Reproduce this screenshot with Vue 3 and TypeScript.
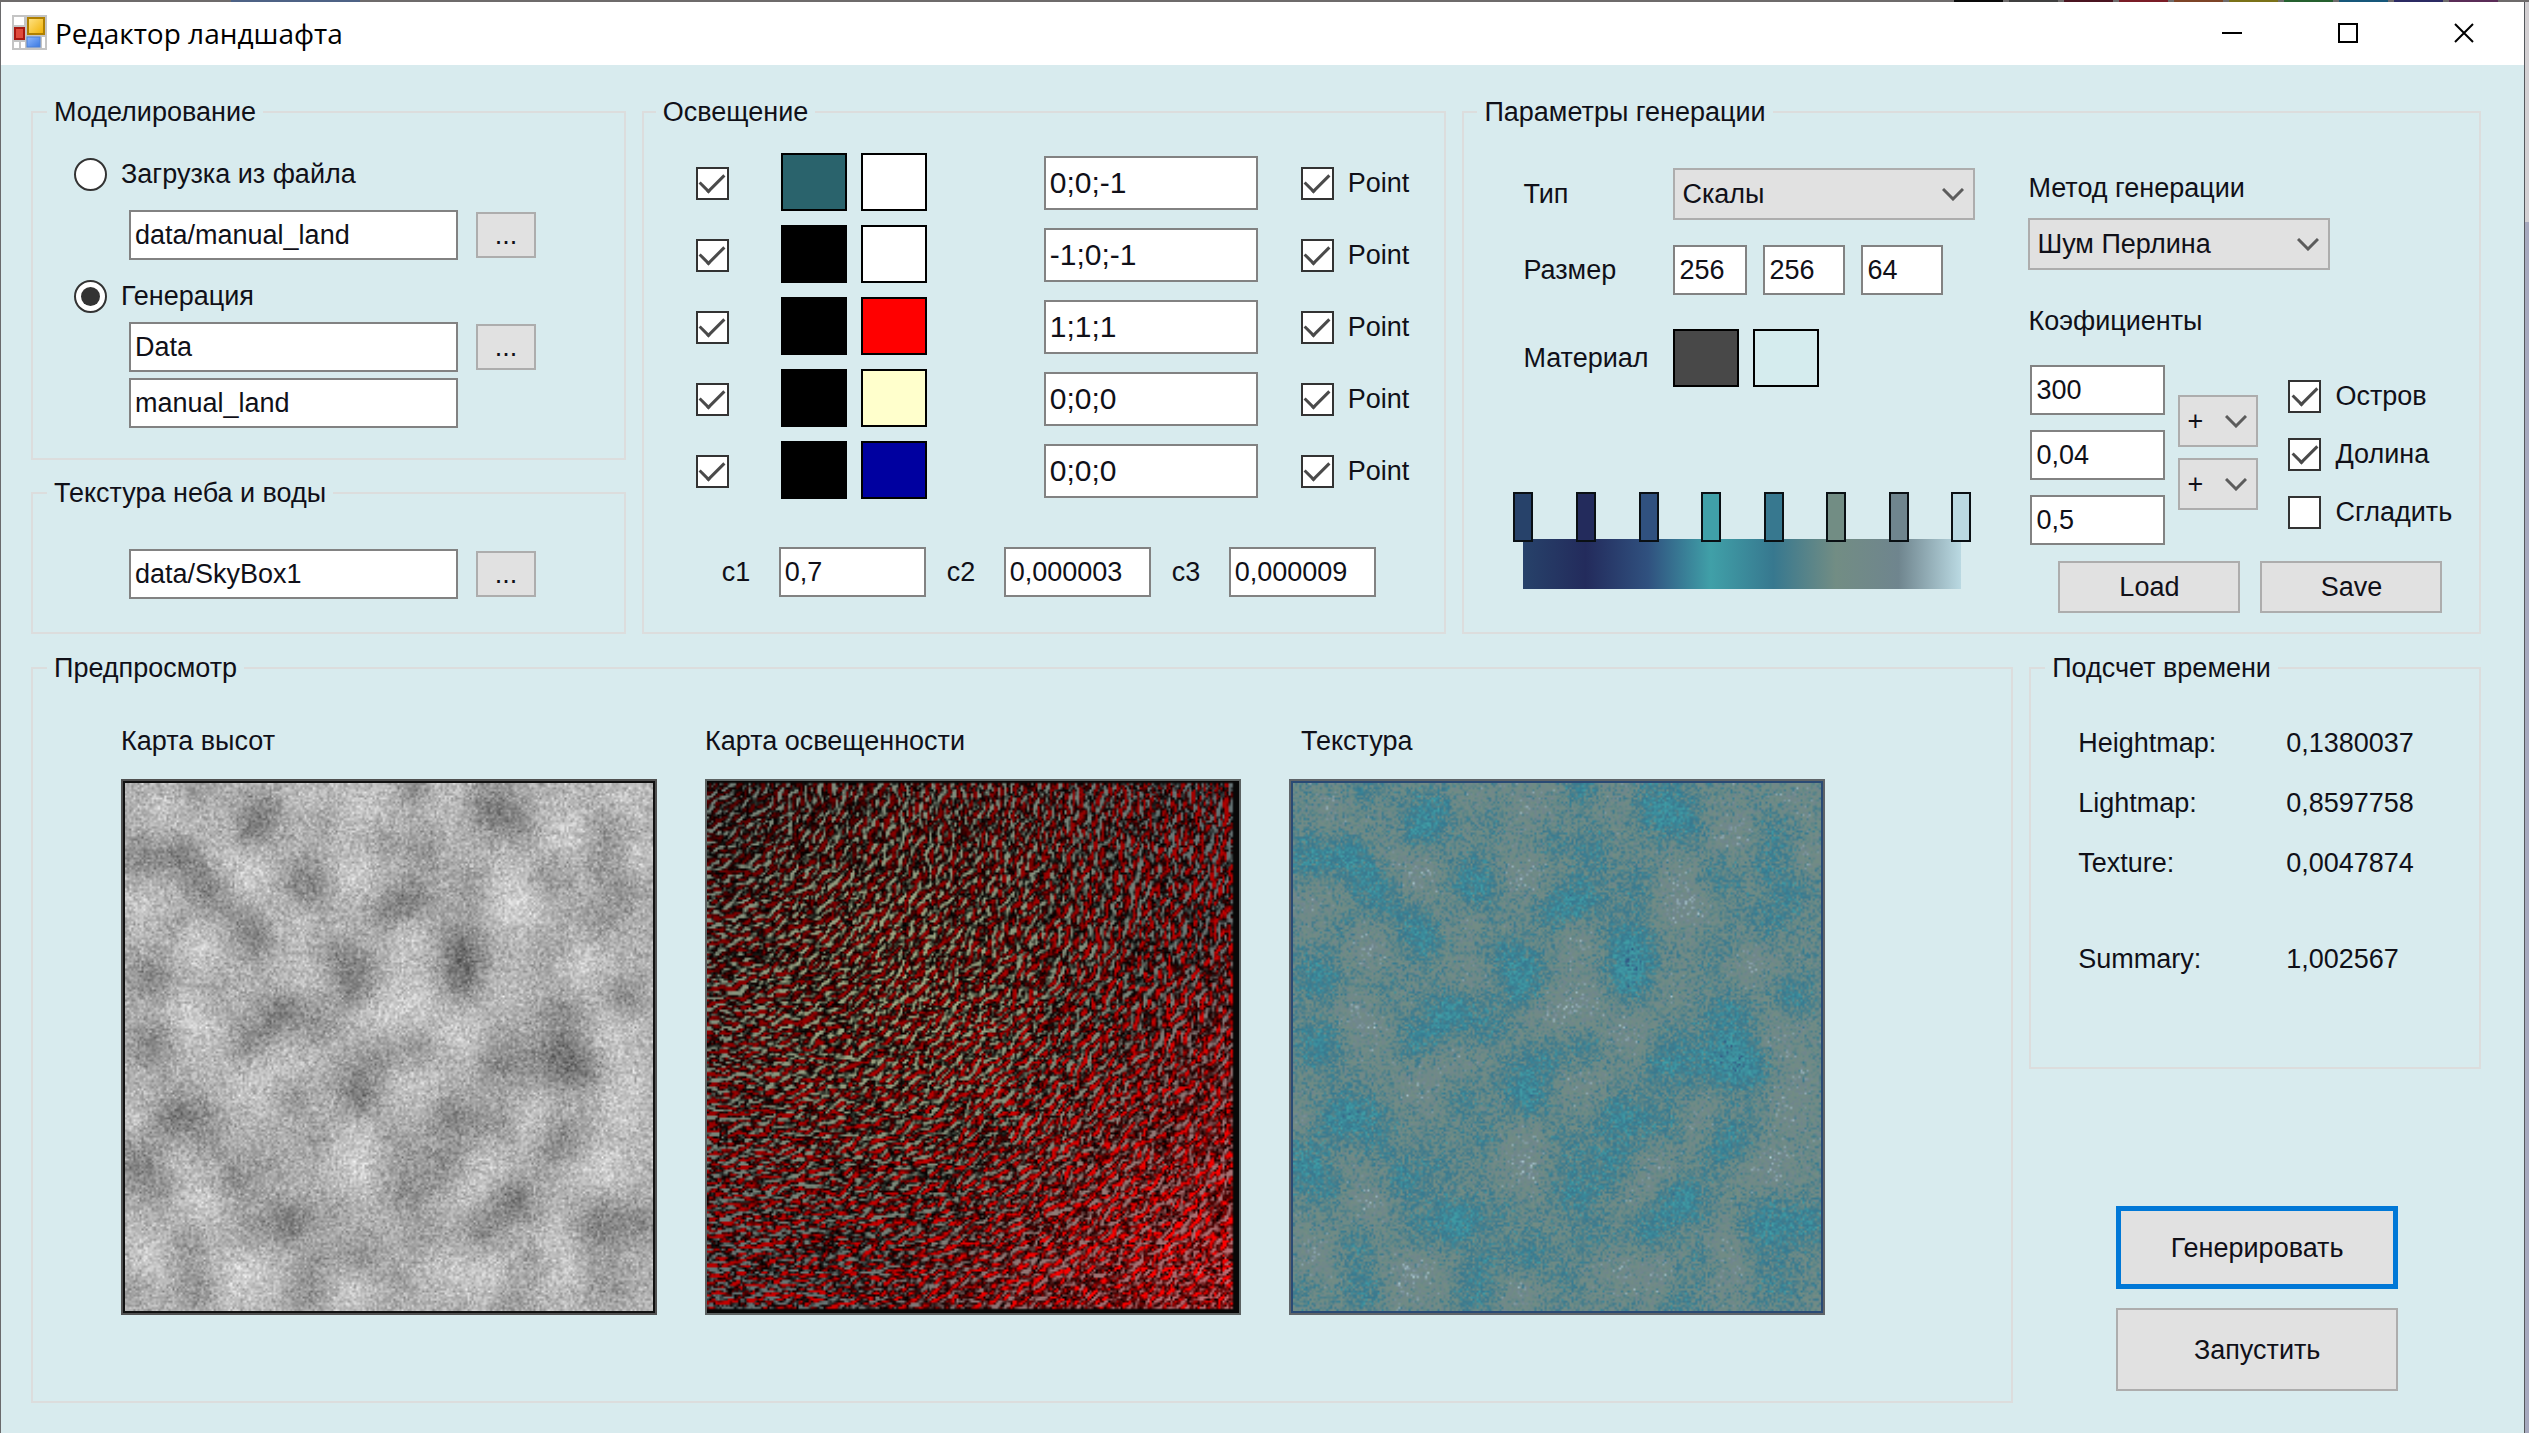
<script setup lang="ts">
import { onMounted, reactive, ref } from 'vue'

type Blob = [x: number, y: number, radius: number, weight: number]
type Rgb = [number, number, number]

interface Light {
  on: boolean
  ambient: string
  diffuse: string
  vector: string
  point: boolean
}

const source = ref('generate')
const loadPath = ref('data/manual_land')
const saveFolder = ref('Data')
const saveName = ref('manual_land')
const skyPath = ref('data/SkyBox1')

const lights = reactive<Light[]>([
  { on: true, ambient: '#2a636c', diffuse: '#ffffff', vector: '0;0;-1', point: true },
  { on: true, ambient: '#000000', diffuse: '#ffffff', vector: '-1;0;-1', point: true },
  { on: true, ambient: '#000000', diffuse: '#ff0000', vector: '1;1;1', point: true },
  { on: true, ambient: '#000000', diffuse: '#ffffcc', vector: '0;0;0', point: true },
  { on: true, ambient: '#000000', diffuse: '#0000a0', vector: '0;0;0', point: true },
])
const attenuation = reactive([
  { name: 'c1', value: '0,7' },
  { name: 'c2', value: '0,000003' },
  { name: 'c3', value: '0,000009' },
])

const kind = ref('Скалы')
const method = ref('Шум Перлина')
const size = reactive(['256', '256', '64'])
const material = ['#484848', '#d5ecee']
const factors = reactive(['300', '0,04', '0,5'])
const operators = reactive(['+', '+'])
const options = reactive([
  { name: 'Остров', on: true },
  { name: 'Долина', on: true },
  { name: 'Сгладить', on: false },
])
const palette = ['#27426a', '#232b5c', '#30517f', '#40a0a8', '#37788f', '#728d84', '#6f858e', '#bad9e2']
const ramp = `linear-gradient(to right, ${palette.join(', ')})`

const timings = [
  { name: 'Heightmap:', value: '0,1380037' },
  { name: 'Lightmap:', value: '0,8597758' },
  { name: 'Texture:', value: '0,0047874' },
  { name: 'Summary:', value: '1,002567' },
]

const keyColours = ['#0a0a0a', '#404040', '#4a1420', '#7a1c26', '#7d4427', '#7a7118', '#25602f', '#16577a', '#2b2a63', '#5a2c57']

const heightCanvas = ref<HTMLCanvasElement | null>(null)
const lightCanvas = ref<HTMLCanvasElement | null>(null)
const textureCanvas = ref<HTMLCanvasElement | null>(null)

const N = 256

const valleys: Blob[] = [
  [33, 4, 9, 0.5], [66, 14, 12, 0.9], [60, 24, 8, 0.6], [138, 2, 9, 0.8], [178, 11, 14, 1], [191, 20, 10, 0.6],
  [9, 35, 13, 0.9], [28, 35, 10, 0.8], [36, 45, 11, 0.5], [40, 53, 11, 0.6], [88, 48, 13, 1], [95, 18, 9, 0.4],
  [123, 26, 12, 0.4], [145, 32, 11, 0.5], [139, 55, 11, 0.95], [126, 62, 10, 0.7], [62, 74, 12, 1], [50, 62, 10, 0.5],
  [23, 68, 10, 0.4], [164, 83, 12, 1.1], [163, 95, 10, 0.9], [162, 72, 12, 0.4], [167, 51, 10, 0.5], [110, 91, 13, 1],
  [99, 80, 9, 0.5], [110, 103, 8, 0.4], [12, 94, 12, 0.9], [43, 101, 10, 0.4], [75, 110, 11, 1], [62, 122, 11, 0.7],
  [93, 116, 12, 0.6], [56, 129, 8, 0.4], [13, 126, 12, 0.9], [140, 128, 10, 0.6], [121, 133, 10, 0.6],
  [112, 147, 12, 0.9], [115, 156, 8, 0.4], [184, 135, 15, 0.8], [212, 133, 14, 1.3], [223, 141, 11, 0.5],
  [212, 112, 12, 0.6], [204, 106, 12, 0.2], [242, 103, 10, 0.8], [206, 80, 12, 0.4], [206, 45, 13, 0.5],
  [232, 35, 11, 0.6], [234, 20, 9, 0.5], [243, 51, 11, 0.6], [230, 66, 12, 0.5], [158, 162, 13, 0.9],
  [180, 164, 11, 0.6], [154, 185, 13, 0.7], [132, 175, 11, 0.4], [136, 197, 12, 0.7], [80, 152, 11, 0.5],
  [23, 162, 12, 1], [37, 160, 11, 0.6], [41, 175, 9, 0.4], [95, 172, 10, 0.5], [67, 183, 13, 0.4],
  [6, 185, 13, 0.9], [17, 197, 10, 0.5], [52, 193, 10, 0.7], [188, 202, 12, 1.1], [173, 216, 11, 0.7],
  [212, 172, 12, 0.9], [203, 181, 9, 0.3], [80, 212, 12, 1.1], [62, 216, 12, 0.5], [30, 223, 11, 0.6],
  [34, 244, 12, 0.7], [230, 214, 15, 1], [251, 212, 11, 0.7], [114, 229, 13, 0.6], [132, 241, 8, 0.4],
  [88, 246, 11, 0.7], [91, 231, 9, 0.4], [145, 220, 11, 0.5], [197, 231, 9, 0.5], [188, 250, 9, 0.6],
  [234, 243, 13, 0.5], [102, 206, 9, 0.4], [4, 244, 9, 0.4],
]

const peaks: Blob[] = [
  [21, 12, 14, 0.5], [60, 45, 13, 0.9], [43, 34, 9, 0.4], [117, 11, 16, 0.8], [86, 7, 12, 0.5], [110, 43, 13, 0.9],
  [158, 7, 11, 0.5], [212, 24, 14, 0.9], [242, 5, 13, 0.6], [249, 37, 10, 0.8], [186, 45, 12, 0.6], [190, 60, 14, 1],
  [10, 57, 13, 0.8], [36, 78, 14, 0.9], [88, 91, 13, 0.6], [80, 68, 13, 0.5], [136, 76, 12, 0.7], [136, 106, 14, 0.9],
  [123, 112, 12, 0.5], [162, 122, 12, 0.8], [221, 87, 14, 0.8], [184, 101, 11, 0.5], [30, 112, 14, 0.8],
  [37, 124, 12, 0.5], [62, 147, 15, 0.7], [78, 133, 12, 0.5], [140, 147, 14, 0.7], [238, 122, 13, 0.8],
  [242, 147, 12, 0.7], [240, 162, 12, 0.5], [197, 164, 13, 0.8], [110, 175, 13, 0.9], [112, 191, 12, 0.7],
  [230, 187, 15, 1], [175, 187, 12, 0.7], [167, 197, 10, 0.5], [24, 183, 9, 0.5], [36, 202, 13, 0.9],
  [12, 229, 15, 0.8], [58, 239, 18, 1], [110, 246, 12, 0.9], [154, 235, 13, 0.6], [175, 239, 12, 0.7],
  [210, 220, 14, 0.7], [212, 241, 12, 0.6], [4, 160, 8, 0.6],
]

function makeRandom(seed: number): () => number {
  let a = seed
  return () => {
    a = (a + 0x6d2b79f5) | 0
    let t = Math.imul(a ^ (a >>> 15), 1 | a)
    t = (t + Math.imul(t ^ (t >>> 7), 61 | t)) ^ t
    return ((t ^ (t >>> 14)) >>> 0) / 4294967296
  }
}

function addBlobs(field: Float32Array, blobs: Blob[], amplitude: number) {
  for (const [cx, cy, r, w] of blobs) {
    const reach = Math.ceil(r * 2.4)
    for (let y = Math.max(0, cy - reach); y < Math.min(N, cy + reach); y++) {
      for (let x = Math.max(0, cx - reach); x < Math.min(N, cx + reach); x++) {
        const d = ((x - cx) ** 2 + (y - cy) ** 2) / (r * r)
        field[y * N + x] += amplitude * w * Math.exp(-d * 1.1)
      }
    }
  }
}

function buildHeights(): Float32Array {
  const random = makeRandom(20)
  const field = new Float32Array(N * N).fill(178)
  addBlobs(field, valleys, -48)
  addBlobs(field, peaks, 28)
  for (let i = 0; i < field.length; i++) {
    field[i] += (random() + random() + random() - 1.5) * 37
  }
  return field
}

function toRgb(hex: string): Rgb {
  const n = parseInt(hex.slice(1), 16)
  return [n >> 16, (n >> 8) & 255, n & 255]
}

function paint(canvas: HTMLCanvasElement | null, shade: (x: number, y: number) => Rgb) {
  const ctx = canvas?.getContext('2d')
  if (!ctx) return
  const image = ctx.createImageData(N, N)
  for (let y = 0; y < N; y++) {
    for (let x = 0; x < N; x++) {
      const c = shade(x, y)
      const i = (y * N + x) * 4
      image.data[i] = c[0]
      image.data[i + 1] = c[1]
      image.data[i + 2] = c[2]
      image.data[i + 3] = 255
    }
  }
  ctx.putImageData(image, 0, 0)
}

function drawMaps() {
  const heights = buildHeights()
  const stops = palette.map(toRgb)

  paint(heightCanvas.value, (x, y) => {
    const v = heights[y * N + x]
    return [v, v, v]
  })

  paint(textureCanvas.value, (x, y) => {
    const t = (Math.min(254, Math.max(0, heights[y * N + x])) / 255) * (stops.length - 1)
    const k = Math.floor(t)
    const f = t - k
    const a = stops[k]
    const b = stops[k + 1]
    return [a[0] + (b[0] - a[0]) * f, a[1] + (b[1] - a[1]) * f, a[2] + (b[2] - a[2]) * f]
  })

  const random = makeRandom(77)
  const grain = new Float32Array(N * N)
  for (let i = 0; i < grain.length; i++) grain[i] = random() - 0.5
  const sample = (x: number, y: number): number => {
    const cx = Math.min(N - 1.01, Math.max(0, x))
    const cy = Math.min(N - 1.01, Math.max(0, y))
    const ix = Math.floor(cx)
    const iy = Math.floor(cy)
    const fx = cx - ix
    const fy = cy - iy
    const i = iy * N + ix
    const top = grain[i] * (1 - fx) + grain[i + 1] * fx
    const bottom = grain[Math.min(i + N, N * N - 2)] * (1 - fx) + grain[Math.min(i + N + 1, N * N - 1)] * fx
    return top * (1 - fy) + bottom * fy
  }

  // Slopes are measured away from the top-left corner, so ridges run across that direction.
  paint(lightCanvas.value, (x, y) => {
    if (x > N - 4 || y < 1 || y > N - 3) return [8, 8, 8]
    const length = Math.hypot(x + 20, y + 20)
    const dx = (x + 20) / length
    const dy = (y + 20) / length
    let slope = 0
    for (const t of [-1, 0, 1]) {
      const px = x - dy * t
      const py = y + dx * t
      slope += sample(px + dx, py + dy) - sample(px - dx, py - dy)
    }
    const u = x / N
    const v = y / N
    const lit = u + v * 1.3
    slope = slope * 1.5
    if (slope > 0) {
      const glow = Math.min(1, slope)
      const power = 125 + 135 * Math.min(1, Math.max(0, (lit - 0.3) / 1.7)) ** 1.3
      return [glow * power * Math.min(1, 0.6 + lit), 0, 0]
    }
    const glow = Math.min(1, -slope)
    const warm = Math.exp(-((u - 0.35) ** 2 + (v - 0.38) ** 2) * 5)
    const red = Math.max(0, u + v - 1.2) * 130
    return [glow * (95 + 65 * warm) + red, glow * (108 + 62 * warm), glow * (114 + 18 * warm)]
  })
}

onMounted(drawMaps)
</script>

<template>
  <div class="desktop">
    <div class="backdrop-top">
      <span v-for="c in keyColours" :key="c" :style="{ background: c }"></span>
    </div>
    <div class="stage">
      <main class="window">
        <header class="titlebar">
          <svg class="app-icon" viewBox="0 0 35 35" aria-hidden="true">
            <defs>
              <linearGradient id="gold" x1="0" y1="0" x2="1" y2="1">
                <stop offset="0" stop-color="#ffe488" /><stop offset="1" stop-color="#f0b000" />
              </linearGradient>
              <linearGradient id="sky" x1="0" y1="0" x2="1" y2="1">
                <stop offset="0" stop-color="#8db8ff" /><stop offset="1" stop-color="#3a78e0" />
              </linearGradient>
            </defs>
            <rect width="35" height="35" fill="#c4c4c4" />
            <rect x="2" y="2" width="10" height="8" fill="#fff" />
            <rect x="2" y="27" width="5" height="6" fill="#fff" />
            <rect x="9" y="27" width="4" height="6" fill="#fff" />
            <rect x="30" y="22" width="3" height="11" fill="#fff" />
            <rect x="16" y="3" width="16" height="16" fill="url(#gold)" stroke="#b08000" stroke-width="2" />
            <rect x="3" y="13" width="9" height="11" fill="#e04a3c" stroke="#a81810" stroke-width="2" />
            <rect x="15" y="22" width="13" height="10" fill="url(#sky)" stroke="#4a80d8" stroke-width="1" />
          </svg>
          <h1>Редактор ландшафта</h1>
          <div class="caption-buttons">
            <button type="button" aria-label="Свернуть">
              <svg viewBox="0 0 20 20"><path d="M0 10H20" /></svg>
            </button>
            <button type="button" aria-label="Развернуть">
              <svg viewBox="0 0 20 20"><path d="M1 1H19V19H1Z" /></svg>
            </button>
            <button type="button" aria-label="Закрыть">
              <svg viewBox="0 0 20 20"><path d="M1 1L19 19M19 1L1 19" /></svg>
            </button>
          </div>
        </header>

        <div class="client">
          <div class="settings">
            <div class="stack">
              <fieldset class="modeling">
                <legend>Моделирование</legend>
                <label class="choice"><input v-model="source" type="radio" name="source" value="load" />Загрузка из файла</label>
                <div class="path first">
                  <input v-model="loadPath" class="box" type="text" aria-label="Файл ландшафта" />
                  <button type="button" class="browse" aria-label="Выбрать файл">...</button>
                </div>
                <label class="choice"><input v-model="source" type="radio" name="source" value="generate" />Генерация</label>
                <div class="path second">
                  <input v-model="saveFolder" class="box" type="text" aria-label="Папка" />
                  <button type="button" class="browse" aria-label="Выбрать папку">...</button>
                </div>
                <div class="path">
                  <input v-model="saveName" class="box" type="text" aria-label="Имя файла" />
                </div>
              </fieldset>
              <fieldset class="sky">
                <legend>Текстура неба и воды</legend>
                <div class="path">
                  <input v-model="skyPath" class="box" type="text" aria-label="Текстура неба" />
                  <button type="button" class="browse" aria-label="Выбрать текстуру">...</button>
                </div>
              </fieldset>
            </div>

            <fieldset class="lighting">
              <legend>Освещение</legend>
              <div class="lights">
                <div v-for="(light, i) in lights" :key="i" class="light">
                  <input v-model="light.on" type="checkbox" :aria-label="`Источник ${i + 1}`" />
                  <div class="swatches">
                    <button type="button" class="swatch" aria-label="Фоновый цвет" :style="{ background: light.ambient }"></button>
                    <button type="button" class="swatch" aria-label="Рассеянный цвет" :style="{ background: light.diffuse }"></button>
                  </div>
                  <input v-model="light.vector" class="box vector" type="text" aria-label="Направление" />
                  <label class="check"><input v-model="light.point" type="checkbox" />Point</label>
                </div>
              </div>
              <div class="attenuation">
                <label v-for="c in attenuation" :key="c.name"><span>{{ c.name }}</span><input v-model="c.value" class="box" type="text" /></label>
              </div>
            </fieldset>

            <fieldset class="params">
              <legend>Параметры генерации</legend>
              <div class="terrain">
                <div class="props">
                  <label for="kind">Тип</label>
                  <div class="picker">
                    <select id="kind" v-model="kind"><option>Скалы</option></select>
                    <svg viewBox="0 0 22 13"><path d="M1 1L11 11L21 1" /></svg>
                  </div>
                  <label for="size-0">Размер</label>
                  <div class="sizes">
                    <input v-for="(s, i) in size" :id="`size-${i}`" :key="i" v-model="size[i]" class="box" type="text" :aria-label="`Размер ${i + 1}`" />
                  </div>
                  <span class="caption">Материал</span>
                  <div class="materials">
                    <button v-for="m in material" :key="m" type="button" class="swatch" aria-label="Цвет материала" :style="{ background: m }"></button>
                  </div>
                </div>
                <div class="gradient">
                  <div class="markers">
                    <button v-for="p in palette" :key="p" type="button" aria-label="Цвет градиента" :style="{ background: p }"></button>
                  </div>
                  <div class="ramp" :style="{ background: ramp }"></div>
                </div>
              </div>

              <div class="algorithm">
                <label for="method">Метод генерации</label>
                <div class="picker method">
                  <select id="method" v-model="method"><option>Шум Перлина</option></select>
                  <svg viewBox="0 0 22 13"><path d="M1 1L11 11L21 1" /></svg>
                </div>
                <span class="caption">Коэфициенты</span>
                <div class="factors">
                  <div class="values">
                    <input v-for="(f, i) in factors" :key="i" v-model="factors[i]" class="box" type="text" :aria-label="`Коэфициент ${i + 1}`" />
                  </div>
                  <div class="operators">
                    <div v-for="(o, i) in operators" :key="i" class="picker">
                      <select v-model="operators[i]" :aria-label="`Операция ${i + 1}`"><option>+</option></select>
                      <svg viewBox="0 0 22 13"><path d="M1 1L11 11L21 1" /></svg>
                    </div>
                  </div>
                  <div class="options">
                    <label v-for="o in options" :key="o.name" class="check"><input v-model="o.on" type="checkbox" />{{ o.name }}</label>
                  </div>
                </div>
                <div class="files">
                  <button type="button" class="push">Load</button>
                  <button type="button" class="push">Save</button>
                </div>
              </div>
            </fieldset>
          </div>

          <div class="results">
            <fieldset class="preview">
              <legend>Предпросмотр</legend>
              <figure>
                <figcaption>Карта высот</figcaption>
                <canvas ref="heightCanvas" class="map height" width="256" height="256"></canvas>
              </figure>
              <figure>
                <figcaption>Карта освещенности</figcaption>
                <canvas ref="lightCanvas" class="map light-map" width="256" height="256"></canvas>
              </figure>
              <figure>
                <figcaption class="inset">Текстура</figcaption>
                <canvas ref="textureCanvas" class="map texture" width="256" height="256"></canvas>
              </figure>
            </fieldset>
            <div class="side">
              <fieldset class="timing">
                <legend>Подсчет времени</legend>
                <dl>
                  <div v-for="t in timings" :key="t.name"><dt>{{ t.name }}</dt><dd>{{ t.value }}</dd></div>
                </dl>
              </fieldset>
              <div class="actions">
                <button type="button" class="push primary">Генерировать</button>
                <button type="button" class="push">Запустить</button>
              </div>
            </div>
          </div>
        </div>
      </main>
      <div class="backdrop-right"></div>
    </div>
  </div>
</template>

<style>
body {
  margin: 0;
}
</style>

<style scoped>
* {
  box-sizing: border-box;
}
.desktop {
  display: flex;
  flex-direction: column;
  min-height: 100vh;
  font: 27px/32px "Liberation Sans", Arial, sans-serif;
  color: #101018;
}
button,
input,
select {
  margin: 0;
  font: inherit;
  color: inherit;
  border-radius: 0;
}
.backdrop-top {
  display: flex;
  justify-content: flex-end;
  gap: 6px;
  height: 2px;
  padding-right: 31px;
  background: linear-gradient(to right, #6e6b6b 231px, #4d6285 231px, #4d6285 360px, #6e6b6b 360px);
}
.backdrop-top span {
  width: 49px;
}
.stage {
  display: flex;
  flex: 1;
}
.backdrop-right {
  width: 4px;
  background: linear-gradient(to bottom, #d2cfd2 220px, #a6a9be 220px);
}
.window {
  display: flex;
  flex-direction: column;
  flex: 1;
  min-width: 0;
  border-left: 1px solid #6a6a6c;
  border-right: 1px solid #55585c;
  background: #d8ebee;
}
.titlebar {
  display: flex;
  align-items: center;
  height: 63px;
  padding: 0 2px 2px 11px;
  background: #fff;
}
.app-icon {
  width: 35px;
  height: 35px;
}
.titlebar h1 {
  margin: 0 0 0 8px;
  font: 28px/36px "Open Sans", "Noto Sans", sans-serif;
  color: #000;
}
.caption-buttons {
  display: flex;
  margin-left: auto;
}
.caption-buttons button {
  display: grid;
  place-items: center;
  width: 116px;
  height: 60px;
  padding: 0;
  border: 0;
  background: none;
}
.caption-buttons svg {
  width: 20px;
  height: 20px;
  fill: none;
  stroke: #000;
  stroke-width: 2;
}
.client {
  padding: 32px 43px 24px 30px;
}
.settings {
  display: grid;
  grid-template-columns: 595fr 805fr 1019fr;
  gap: 16px;
}
.stack {
  display: flex;
  flex-direction: column;
  gap: 18px;
}
fieldset {
  min-width: 0;
  margin: 0;
  padding: 0;
  border: 2px solid #dcdddd;
}
legend {
  padding: 0 7px;
  line-height: 30px;
}
.modeling {
  padding: 31px 0 30px 41px;
}
.sky {
  padding: 41px 0 33px 41px;
}
.modeling legend,
.sky legend {
  margin-left: -27px;
}
.choice,
.check {
  display: flex;
  align-items: center;
  gap: 14px;
  height: 32px;
}
input[type="radio"],
input[type="checkbox"] {
  appearance: none;
  display: grid;
  place-items: center;
  flex: none;
  width: 33px;
  height: 33px;
  border: 2px solid #333;
  background: #fff;
}
input[type="radio"] {
  border-radius: 50%;
}
input[type="radio"]:checked::after {
  content: "";
  width: 19px;
  height: 19px;
  border-radius: 50%;
  background: #333;
}
input[type="checkbox"]:checked::after {
  content: "";
  width: 21px;
  height: 11px;
  margin-bottom: 7px;
  border: solid #4a4a4a;
  border-width: 0 0 3px 3px;
  transform: rotate(-45deg);
}
.box {
  min-width: 0;
  height: 50px;
  padding: 0 4px;
  border: 2px solid #828282;
  background: #fff;
}
.path {
  display: flex;
  align-items: center;
  gap: 18px;
  margin: 6px 0 0 55px;
}
.path.first {
  margin-block: 20px;
}
.path.second {
  margin-top: 10px;
}
.sky .path {
  margin-top: 0;
}
.path .box {
  width: 329px;
}
.browse {
  width: 60px;
  height: 46px;
  padding: 0;
  border: 2px solid #adadad;
  background: #e1e1e1;
}
.lighting {
  padding: 26px 0 35px 52px;
}
.lighting legend {
  margin-left: -40px;
}
.lights {
  display: flex;
  flex-direction: column;
  gap: 12px;
}
.light {
  display: flex;
  align-items: center;
  height: 60px;
}
.swatches {
  display: flex;
  gap: 14px;
  align-self: flex-start;
  margin: 0 117px 0 52px;
}
.swatch {
  width: 66px;
  height: 58px;
  padding: 0;
  border: 2px solid #000;
}
.vector {
  width: 214px;
  height: 54px;
  margin-right: 43px;
  font-size: 30px;
}
.attenuation {
  display: flex;
  gap: 21px;
  margin: 46px 0 0 26px;
}
.attenuation label {
  display: flex;
  align-items: center;
}
.attenuation span {
  width: 57px;
}
.attenuation .box {
  width: 147px;
}
.params {
  padding: 41px 0 0 49px;
}
.params legend {
  margin-left: -36px;
}
.terrain,
.algorithm {
  display: inline-block;
  vertical-align: top;
}
.terrain {
  width: 462px;
  margin-right: 53px;
}
.props {
  display: grid;
  grid-template-columns: 150px 302px;
  grid-template-rows: 52px 50px 76px;
  row-gap: 25px;
  align-items: center;
  padding-left: 10px;
}
.materials {
  display: flex;
  gap: 14px;
}
.sizes {
  display: flex;
  gap: 16px;
}
.sizes .box {
  width: 82px;
}
.sizes .box:first-child {
  width: 74px;
}
.picker {
  display: grid;
  grid-template-columns: 1fr 33px;
  align-items: center;
}
.picker select {
  grid-area: 1 / 1 / 2 / 3;
  appearance: none;
  width: 100%;
  height: 52px;
  padding: 0 7px;
  border: 2px solid #adadad;
  background: #e1e1e1;
}
.picker svg {
  grid-area: 1 / 2;
  width: 22px;
  height: 13px;
  fill: none;
  stroke: #5c5c5c;
  stroke-width: 3;
  pointer-events: none;
}
.gradient {
  margin-top: 96px;
}
.markers {
  position: relative;
  display: flex;
  justify-content: space-between;
  margin-right: 4px;
}
.markers button {
  width: 20px;
  height: 50px;
  padding: 0;
  border: 2px solid #0a1014;
}
.ramp {
  height: 50px;
  margin: -3px 14px 0 10px;
}
.algorithm {
  padding-top: 4px;
}
.algorithm > label,
.algorithm > .caption {
  display: block;
}
.method {
  width: 302px;
  margin: 14px 0 35px;
}
.factors {
  display: flex;
  margin: 28px 0 16px 2px;
}
.values {
  display: flex;
  flex-direction: column;
  gap: 15px;
  width: 135px;
}
.operators {
  display: flex;
  flex-direction: column;
  gap: 11px;
  width: 80px;
  margin: 30px 30px 0 13px;
}
.options {
  display: flex;
  flex-direction: column;
  gap: 26px;
  margin-top: 15px;
}
.files {
  display: flex;
  gap: 20px;
  margin-left: 30px;
}
.push {
  width: 182px;
  height: 52px;
  padding: 0;
  border: 2px solid #adadad;
  background: #e1e1e1;
}
.results {
  display: grid;
  grid-template-columns: 1983fr 452fr;
  align-items: start;
  gap: 16px;
  margin-top: 19px;
}
.preview {
  padding: 42px 0 86px 88px;
  white-space: nowrap;
}
.preview legend {
  margin-left: -74px;
}
figure {
  display: inline-block;
  width: 536px;
  margin: 0 48px 0 0;
}
figcaption {
  margin-bottom: 22px;
}
.inset {
  padding-left: 12px;
}
.map {
  display: block;
  width: 100%;
  border: 2px solid #5c5e5e;
}
.map.height {
  border-color: #505050;
  background: #111;
  padding: 2px;
}
.map.light-map {
  border-color: #5c6262;
  background: #000;
}
.map.texture {
  border-color: #5f6468;
  background: #2a4a74;
  padding: 2px;
}
.timing {
  padding: 44px 0 92px 47px;
}
.timing legend {
  margin-left: -33px;
}
dl {
  display: flex;
  flex-direction: column;
  gap: 28px;
  margin: 0;
}
dl div {
  display: flex;
}
dl div:last-child {
  margin-top: 36px;
}
dt {
  width: 208px;
}
dd {
  margin: 0;
}
.actions {
  display: flex;
  flex-direction: column;
  gap: 19px;
  width: 282px;
  margin: 137px 0 0 87px;
}
.actions .push {
  width: 100%;
  height: 83px;
}
.actions .primary {
  border: 5px solid #0078d7;
}
</style>
